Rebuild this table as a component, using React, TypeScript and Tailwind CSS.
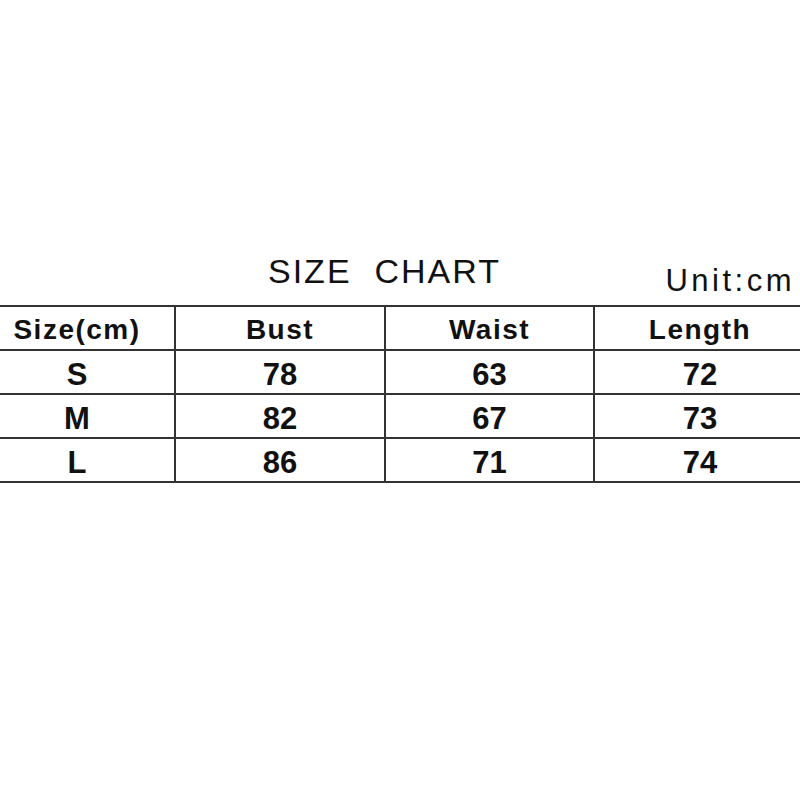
import React from "react";

const rows = [
  ["S", "78", "63", "72"],
  ["M", "82", "67", "73"],
  ["L", "86", "71", "74"],
];

const cols = "grid grid-cols-[196px_210px_209px_210px]";

export default function App() {
  return (
    <div className="w-[800px] h-[800px] bg-white overflow-hidden text-[#111]" style={{ fontFamily: '"Liberation Sans", Arial, sans-serif' }}>
      <div className="flex h-[305px]">
        <div className="mt-[254px] ml-[268px] text-[34px] leading-[34px] tracking-[2px] whitespace-pre font-normal">
          SIZE  CHART
        </div>
        <div className="mt-[265px] ml-auto mr-[5px] text-[31px] leading-[31px] tracking-[3.5px]">Unit:cm</div>
      </div>
      <div className="w-[825px] -ml-[20px] border-t-2 border-[#333]">
        <div className={`${cols} h-[44px] border-b-2 border-[#333] font-bold text-[28px] leading-[28px] tracking-[1.5px]`}>
          {["Size(cm)", "Bust", "Waist", "Length"].map((t, i) => (
            <div key={t} className={`flex items-center justify-center pt-1 ${i < 3 ? "border-r-2 border-[#333]" : ""}`}>
              {t}
            </div>
          ))}
        </div>
        {rows.map((r) => (
          <div key={r[0]} className={`${cols} h-[44px] border-b-2 border-[#333] font-bold text-[31px] leading-[31px]`}>
            {r.map((t, i) => (
              <div key={i} className={`flex items-center justify-center pt-1 ${i < 3 ? "border-r-2 border-[#333]" : ""}`}>
                {t}
              </div>
            ))}
          </div>
        ))}
      </div>
    </div>
  );
}
